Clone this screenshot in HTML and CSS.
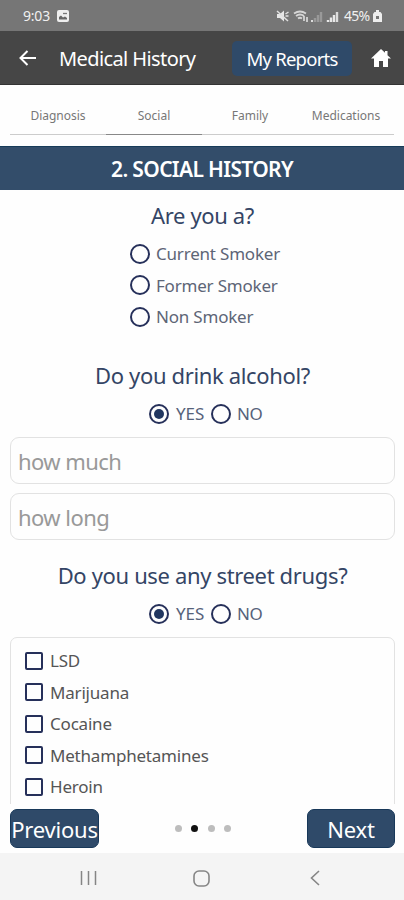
FILE: index.html
```html
<!DOCTYPE html>
<html lang="en">
<head>
<meta charset="utf-8">
<title>Medical History</title>
<link rel="stylesheet" href="styles.css">
</head>
<body>
<header class="status">
  <span class="time">9:03</span>
  <svg class="photo" width="12" height="12" viewBox="0 0 12 12"><rect width="12" height="12" rx="2" fill="#eee"/><path d="M2 9.500V7l2-1.500 2 2 2-1 2 1.500v1.500z" fill="#666"/><path d="M6 3.500h4" stroke="#777" stroke-width="1.300"/></svg>
  <svg class="signals" width="65" height="14" viewBox="0 0 65 14" fill="none">
    <path d="M1 5h3l4-3.500v11L4 9H1z" fill="#e6e6e6"/><path d="M1 2l11 10M9.500 5l3-2M9.500 7h3" stroke="#e0e0e0" stroke-width="1.500"/>
    <path d="M18 4.500q6-4 12 0M20 7q4-3 8 0M22 9.500q2-1.500 4 0" stroke="#d5d5d5" stroke-width="1.800"/><path d="M28 7v5M31 8v5" stroke="#e5e5e5" stroke-width="1.500"/>
    <path d="M36 11v2" stroke="#ddd" stroke-width="2"/><path d="M39 9v4M42 6v7M45 3v10" stroke="#999" stroke-width="2.400"/>
    <path d="M52 11v2M55 8.500V13M58 6v7" stroke="#e8e8e8" stroke-width="2.400"/><path d="M61 3v10" stroke="#ddd" stroke-width="2.400"/>
  </svg>
  <span class="percent">45%</span>
  <svg class="battery" width="9" height="12" viewBox="0 0 9 12"><path d="M3 0h3v2h1.500L9 4v8H0V4l1.500-2H3z" fill="#eee"/><path d="M3 6h3v3H3z" fill="#777"/></svg>
</header>
<nav class="appbar">
  <svg class="back" width="18" height="16" viewBox="0 0 18 16" fill="none" stroke="#fff" stroke-width="2"><path d="M17 8H2M8.500 1L1.500 8l7 7"/></svg>
  <h1 class="title">Medical History</h1>
  <button class="reports">My Reports</button>
  <svg class="home" width="20" height="18" viewBox="0 0 20 18"><path d="M10 0l4 3.800V2h2.500v4.200L20 9.500h-3V18h-5v-6H8v6H3V9.500H0z" fill="#fff"/></svg>
</nav>
<div class="tabs">
  <span class="tab">Diagnosis</span>
  <span class="tab active">Social</span>
  <span class="tab">Family</span>
  <span class="tab">Medications</span>
</div>
<h2 class="banner">2. SOCIAL HISTORY</h2>
<main class="content">
  <h3 class="question">Are you a?</h3>
  <div class="smoking">
    <label class="choice"><i class="radio"></i><span>Current Smoker</span></label>
    <label class="choice"><i class="radio"></i><span>Former Smoker</span></label>
    <label class="choice"><i class="radio"></i><span>Non Smoker</span></label>
  </div>
  <h3 class="question q-alcohol">Do you drink alcohol?</h3>
  <div class="yesno"><i class="radio on"></i><span class="yes">YES</span><i class="radio"></i><span class="no">NO</span></div>
  <div class="field">how much</div>
  <div class="field">how long</div>
  <h3 class="question q-drugs">Do you use any street drugs?</h3>
  <div class="yesno"><i class="radio on"></i><span class="yes">YES</span><i class="radio"></i><span class="no">NO</span></div>
  <div class="drugs">
    <label class="item"><i class="box"></i><span>LSD</span></label>
    <label class="item"><i class="box"></i><span>Marijuana</span></label>
    <label class="item"><i class="box"></i><span>Cocaine</span></label>
    <label class="item"><i class="box"></i><span>Methamphetamines</span></label>
    <label class="item"><i class="box"></i><span>Heroin</span></label>
  </div>
</main>
<footer class="pager">
  <button class="step"><span>Previous</span></button>
  <div class="dots"><i></i><i class="current-dot"></i><i></i><i></i></div>
  <button class="step next"><span>Next</span></button>
</footer>
<div class="system">
  <svg width="17" height="16" viewBox="0 0 17 16" stroke="#858585" stroke-width="1.500"><path d="M1.500 1v14M8.500 1v14M15.500 1v14"/></svg>
  <svg width="17" height="17" viewBox="0 0 17 17" fill="none" stroke="#858585" stroke-width="1.600"><rect x="1" y="1" width="15" height="15" rx="5"/></svg>
  <svg width="10" height="16" viewBox="0 0 10 16" fill="none" stroke="#858585" stroke-width="1.600"><path d="M9 1L1.500 8 9 15"/></svg>
</div>
</body>
</html>
```
FILE: styles.css
```css
* { box-sizing: border-box; }
body { margin: 0; width: 404px; height: 900px; overflow: hidden; background: #fefefe; font-family: "Noto Sans", sans-serif; display: flex; flex-direction: column; white-space: nowrap; }
h1, h2, h3 { margin: 0; font-weight: 400; }
button { border: 0; padding: 0; font-family: inherit; color: #fff; background: #2f4a69; }
svg { flex: none; display: block; }
.status { height: 31px; flex: none; background: #767676; color: #f0f0f0; display: flex; align-items: center; padding-left: 23px; font-size: 14px; }
.time { width: 34px; letter-spacing: -0.2px; }
.signals { margin-left: 207px; }
.percent { width: 29px; margin-left: 3px; letter-spacing: -0.7px; }
.appbar { height: 54px; flex: none; background: #464646; color: #fff; display: flex; align-items: center; padding-left: 19px; border-bottom: 1px solid #333; }
.title { width: 173px; margin: 1px 0 0 22px; font-size: 20px; letter-spacing: -0.6px; }
.reports { width: 120px; height: 35px; margin-top: 1px; border-radius: 5px; font-size: 18.5px; letter-spacing: -0.75px; }
.home { margin-left: 19px; }
.tabs { height: 50px; flex: none; margin: 0 10px; display: grid; grid-template-columns: repeat(4, 1fr); border-bottom: 1px solid #ccc; }
.tab { display: flex; align-items: center; justify-content: center; padding-top: 11px; font-size: 12px; color: #777; margin-bottom: -1px; border-bottom: 1px solid transparent; }
.tab.active { border-color: #888; }
.banner { height: 44px; flex: none; margin-top: 11px; background: #334d6a; color: #fff; font-size: 21px; font-weight: 600; line-height: 44px; text-align: center; border-top: 1px solid #173b59; letter-spacing: -0.65px; }
.content { height: 614px; flex: none; overflow: hidden; padding: 10px 9px 0 10px; }
.question { height: 30px; line-height: 30px; font-size: 22px; letter-spacing: -0.35px; color: #344565; text-align: center; }
.smoking { height: 95px; margin: 8px 0 0 120px; }
.choice { height: 31.5px; display: flex; align-items: center; gap: 6px; font-size: 17px; letter-spacing: -0.2px; color: #5d6576; }
.radio { width: 20px; height: 20px; flex: none; border: 2px solid #26305a; border-radius: 50%; display: flex; align-items: center; justify-content: center; }
.radio.on::after { content: ""; width: 10px; height: 10px; border-radius: 50%; background: #213660; }
.q-alcohol { margin-top: 27px; }
.yesno { height: 31px; margin: 8px 0; padding-left: 139px; display: flex; align-items: center; font-size: 17px; color: #56627a; }
.yes { width: 35px; margin-left: 7px; }
.no { margin-left: 6px; letter-spacing: -0.5px; }
.field { height: 47px; margin-bottom: 9px; padding-left: 7px; border: 1px solid #e2e2e2; border-radius: 9px; line-height: 47px; font-size: 22px; letter-spacing: -0.55px; color: #999; }
.q-drugs { margin-top: 20px; }
.drugs { height: 210px; border: 1px solid #e2e2e2; border-radius: 7px; padding: 7px 0 0 14px; }
.item { height: 31.5px; display: flex; align-items: center; gap: 7px; font-size: 17px; letter-spacing: -0.2px; color: #555; }
.box { width: 18px; height: 18px; flex: none; border: 2px solid #26305a; border-radius: 2px; }
.pager { height: 49px; flex: none; display: flex; justify-content: space-between; padding: 5px 9px 0 10px; }
.step { width: 89px; height: 39px; border-radius: 7px; font-size: 22px; letter-spacing: -0.2px; border: 1px solid #183859; display: flex; align-items: center; justify-content: center; }
.next { width: 88px; }
.dots { display: flex; gap: 9.500px; padding: 16px 0 0 0; }
.dots i { width: 7px; height: 7px; border-radius: 50%; background: #bdbdbd; }
.dots .current-dot { background: #111; }
.system { height: 47px; flex: none; background: #f4f4f4; display: flex; align-items: center; padding: 3px 0 0 80px; gap: 96px; }
.system svg:last-child { margin-left: 4px; }
```
